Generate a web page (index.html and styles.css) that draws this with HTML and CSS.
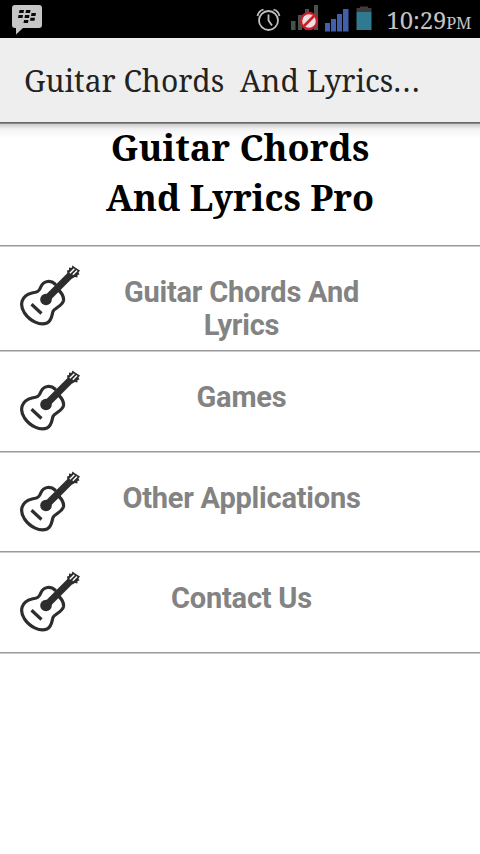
FILE: index.html
```html
<!DOCTYPE html>
<html lang="en">
<head>
<meta charset="utf-8">
<title>Guitar Chords And Lyrics Pro</title>
<link rel="stylesheet" href="styles.css">
</head>
<body>
<svg class="defs" width="0" height="0" aria-hidden="true">
  <symbol id="guitar" viewBox="0 0 60 60">
    <g fill="none" stroke="#2d2d2d" stroke-linecap="round" stroke-linejoin="round">
      <path stroke-width="3.200" d="M35 18.500C31 14.500 23.500 15 21 21C19 26.500 17 26.500 12 27.500C1.500 30-1 39 4.500 47.500C10 55.500 20 60.500 27 57.500C32 55 31.500 50.500 33 46C35 42 42.500 40.500 43.500 35C44 31 42 28 39 25"/>
      <path stroke-width="3.200" stroke-linecap="butt" d="M11.500 38.800L21.500 48"/>
      <path stroke-width="7" stroke-linecap="butt" d="M26 34L51 9"/>
    </g>
    <circle cx="26" cy="34" r="5.800" fill="#2d2d2d"/>
    <path fill="#2d2d2d" d="M47.500 8L47 5L49 4.500L49 2L51.500 2.500L52.500 0L54.500 1.500L57.500 3.500L60 5L58.500 7L59.500 9L57.500 9.500L57.500 12L55 11.500L52 13Z"/>
    <path stroke="#fff" stroke-width="1.400" d="M49.800 7.800L54.300 3.300M52.800 9.300L57 5.100"/>
  </symbol>
</svg>
<header class="status">
  <svg class="bbm" width="32" height="32" viewBox="0 0 32 32">
    <path fill="#c6c6c6" d="M4 1H28Q31 1 31 4V21Q31 24 28 24H12L5 30.500V24H4Q1 24 1 21V4Q1 1 4 1Z"/>
    <path fill="#090909" d="M8.500 6H13L12.500 9H8ZM15 6H19.500L19 9H14.500ZM7.500 11H12L11.500 14H7ZM14 11H18.500L18 14H13.500ZM20.500 9H25L24.500 12H20ZM19.500 13.800H24L23.500 16.800H19ZM13 16H17.500L17 19H12.500Z"/>
  </svg>
  <svg class="tray" width="124" height="32" viewBox="0 0 124 32">
    <g fill="none" stroke="#c0c0c0" stroke-width="1.800">
      <circle cx="12.500" cy="16.500" r="9.500"/>
      <path d="M12.500 10.500V16.500L16 21.500M1.500 12Q2.500 7 7.500 5.500M17.500 5.500Q22.500 7 23.500 12"/>
    </g>
    <path fill="#46524c" d="M35 17H39.500V26H35ZM42 11H46V26H42ZM49 5H53V26H49ZM58 1H62V26H58Z"/>
    <circle cx="53" cy="17" r="8" fill="#efe0de" stroke="#c71f2c" stroke-width="2.400"/>
    <path stroke="#c71f2c" stroke-width="2.600" d="M48 22L58 12"/>
    <path fill="#415fae" d="M69 19H74V27.500H69ZM75 15H80V27.500H75ZM81 10H86V27.500H81ZM87 5H92.500V27.500H87Z"/>
    <path fill="#3f3b3a" d="M104 2.500H112V4H115.500V8H100.500V4H104Z"/>
    <path fill="#307a91" d="M100.500 8H115.500V26H100.500Z"/>
  </svg>
  <div class="clock">10:29<span class="ampm">PM</span></div>
</header>
<div class="appbar">Guitar Chords&nbsp; And Lyrics<span class="dots">...</span></div>
<main>
  <h1 class="heading">Guitar Chords<br>And Lyrics Pro</h1>
  <ul class="menu">
    <li class="item item-tall"><svg class="icon"><use href="#guitar"/></svg><span class="label">Guitar Chords And Lyrics</span></li>
    <li class="item"><svg class="icon"><use href="#guitar"/></svg><span class="label">Games</span></li>
    <li class="item"><svg class="icon"><use href="#guitar"/></svg><span class="label">Other Applications</span></li>
    <li class="item"><svg class="icon"><use href="#guitar"/></svg><span class="label">Contact Us</span></li>
  </ul>
</main>
</body>
</html>
```
FILE: styles.css
```css
* { box-sizing: border-box; }
body { margin: 0; min-height: 854px; background: #fff; font-family: "Noto Serif", "Droid Serif", "DejaVu Serif Condensed", serif; overflow: hidden; }
.defs { display: block; height: 0; }
.status { display: flex; height: 38px; background: #000; padding: 4px 9px 0 11px; }
.bbm { flex: none; }
.tray { flex: none; margin-left: 213px; }
.clock { margin-left: 6.500px; color: #c4c4c4; font-size: 24px; line-height: 31px; letter-spacing: -.15px; white-space: nowrap; }
.ampm { font-size: 16.500px; }
.appbar { height: 85px; padding-left: 24px; background: #eee; border-bottom: 1px solid #666; color: #222; font-size: 30px; line-height: 86px; white-space: pre; }
.dots { letter-spacing: 1.800px; }
.heading { margin: 0; height: 122px; background: linear-gradient(#888 1px, #ccc 1px, #f2f2f2 6px, #fff 15px); text-align: center; font-size: 36px; line-height: 50px; font-weight: bold; color: #000; }
.menu { margin: 0; padding: 0; list-style: none; border-top: 1px solid #999; box-shadow: inset 0 1px #ccc; }
.item { display: flex; height: 100.500px; padding: 19px 0 0 20px; border-bottom: 1px solid #999; box-shadow: 0 1px #ccc; }
.item-tall { height: 105px; }
.icon { flex: none; width: 60px; height: 61px; }
.label { width: 250px; margin: 11px 0 0 36.500px; text-align: center; color: #838383; font: bold 29px/33px Roboto, sans-serif; letter-spacing: -.22px; }
```
